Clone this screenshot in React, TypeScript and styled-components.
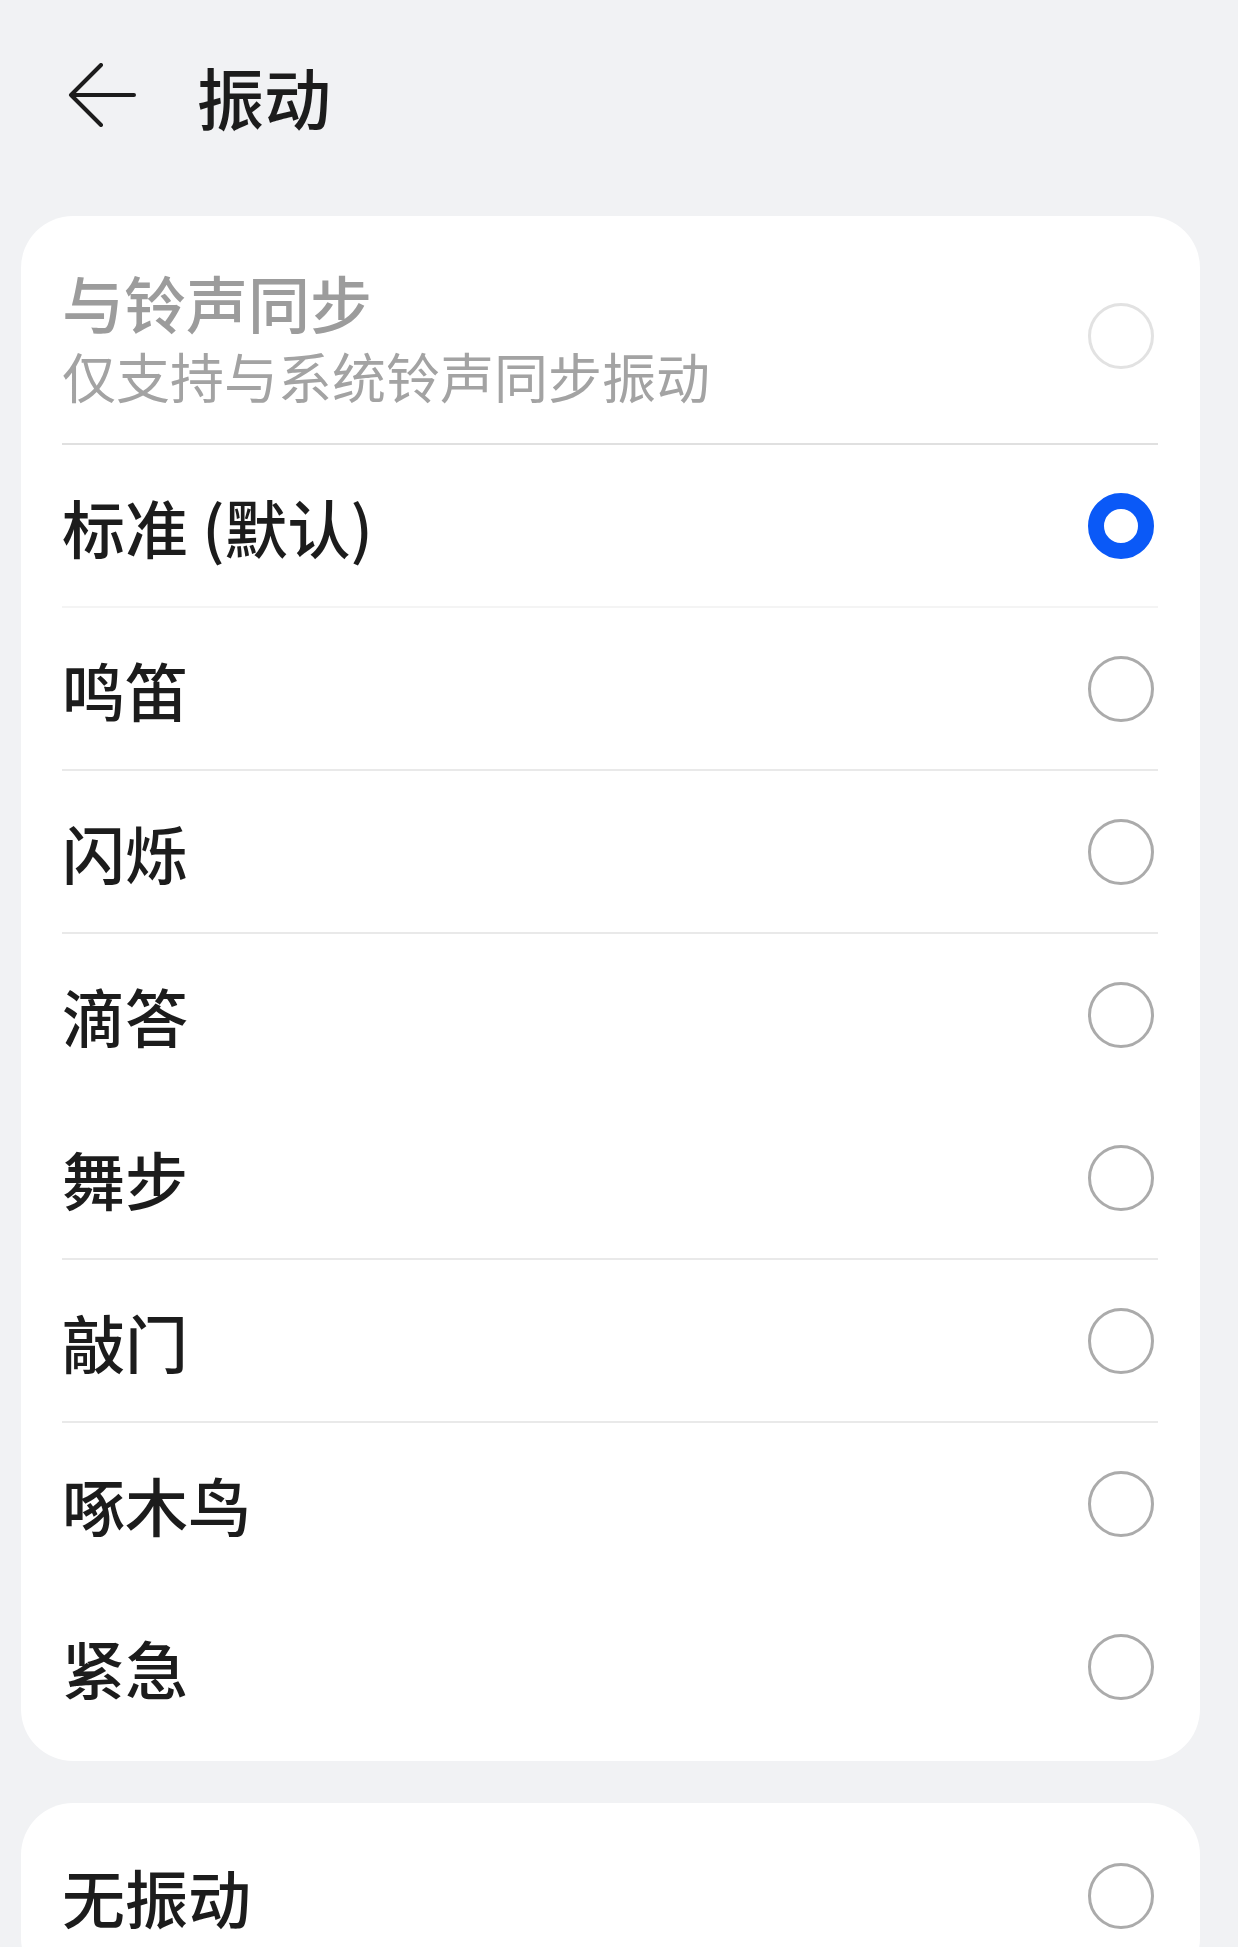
import React from "react";
import styled, { createGlobalStyle } from "styled-components";

const GlobalStyle = createGlobalStyle`
  html, body {
    margin: 0;
    padding: 0;
    background: #f1f2f4;
  }
  body {
    font-family: "Noto Sans CJK SC", "Noto Sans", sans-serif;
    -webkit-font-smoothing: antialiased;
  }
`;

const Page = styled.div`
  padding: 0 38px 0 21px;
  min-height: 1947px;
  box-sizing: border-box;
  overflow: hidden;
`;

const Header = styled.header`
  height: 190px;
  display: flex;
  align-items: center;
  padding-left: 47px;
`;

const BackButton = styled.button`
  width: 68px;
  height: 64px;
  padding: 0;
  border: none;
  background: transparent;
  display: flex;
  align-items: center;
  justify-content: center;
  color: #1c1c1c;
`;

const Title = styled.h1`
  margin: 0 0 0 61px;
  font-size: 67px;
  font-weight: 500;
  color: #1c1c1c;
  line-height: 1;
  letter-spacing: 0;
`;

const Card = styled.section<{ $gap?: number }>`
  background: #ffffff;
  border-radius: 52px;
  padding: 12px 42px 12px 41px;
  margin-top: ${(p) => p.$gap ?? 0}px;
`;

const Row = styled.div<{ $height: number; $divider?: string }>`
  height: ${(p) => p.$height}px;
  display: flex;
  align-items: center;
  justify-content: space-between;
  box-sizing: border-box;
  border-bottom: 2px solid ${(p) => p.$divider ?? "transparent"};
`;

const TextBlock = styled.div`
  display: flex;
  flex-direction: column;
  padding-top: 6px;
`;

const Label = styled.span<{ $muted?: boolean }>`
  font-size: ${(p) => (p.$muted ? 62 : 63)}px;
  font-weight: 500;
  line-height: 74px;
  color: ${(p) => (p.$muted ? "#9c9c9c" : "#1c1c1c")};
`;

const SubLabel = styled.span`
  font-size: 54px;
  font-weight: 400;
  line-height: 74px;
  color: #a3a3a3;
`;

const Radio = styled.span<{ $checked?: boolean; $disabled?: boolean }>`
  width: 66px;
  height: 66px;
  flex: none;
  box-sizing: border-box;
  border-radius: 50%;
  margin-right: 4px;
  border: ${(p) =>
    p.$checked
      ? "16px solid #0a59f7"
      : p.$disabled
      ? "3px solid #e2e2e2"
      : "3px solid #ababab"};
  background: #ffffff;
`;

type Option = { label: string; checked?: boolean; divider?: string };

const options: Option[] = [
  { label: "标准 (默认)", checked: true, divider: "#f4f4f4" },
  { label: "鸣笛", divider: "#e9e9e9" },
  { label: "闪烁", divider: "#e9e9e9" },
  { label: "滴答" },
  { label: "舞步", divider: "#e9e9e9" },
  { label: "敲门", divider: "#e9e9e9" },
  { label: "啄木鸟" },
  { label: "紧急" },
];

const BackArrow = () => (
  <svg width="68" height="64" viewBox="0 0 68 64" fill="none">
    <path
      d="M33 2 L3 32 L33 62 M3 32 H66"
      stroke="#1c1c1c"
      strokeWidth="4"
      strokeLinecap="round"
      strokeLinejoin="round"
    />
  </svg>
);

export default function App() {
  return (
    <>
      <GlobalStyle />
      <Page>
        <Header>
          <BackButton aria-label="返回">
            <BackArrow />
          </BackButton>
          <Title>振动</Title>
        </Header>

        <Card $gap={26}>
          <Row $height={217} $divider="#e0e0e0">
            <TextBlock>
              <Label $muted>与铃声同步</Label>
              <SubLabel>仅支持与系统铃声同步振动</SubLabel>
            </TextBlock>
            <Radio $disabled />
          </Row>
          {options.map((o) => (
            <Row key={o.label} $height={163} $divider={o.divider}>
              <Label>{o.label}</Label>
              <Radio $checked={o.checked} />
            </Row>
          ))}
        </Card>

        <Card $gap={42}>
          <Row $height={163}>
            <Label>无振动</Label>
            <Radio />
          </Row>
        </Card>
      </Page>
    </>
  );
}
